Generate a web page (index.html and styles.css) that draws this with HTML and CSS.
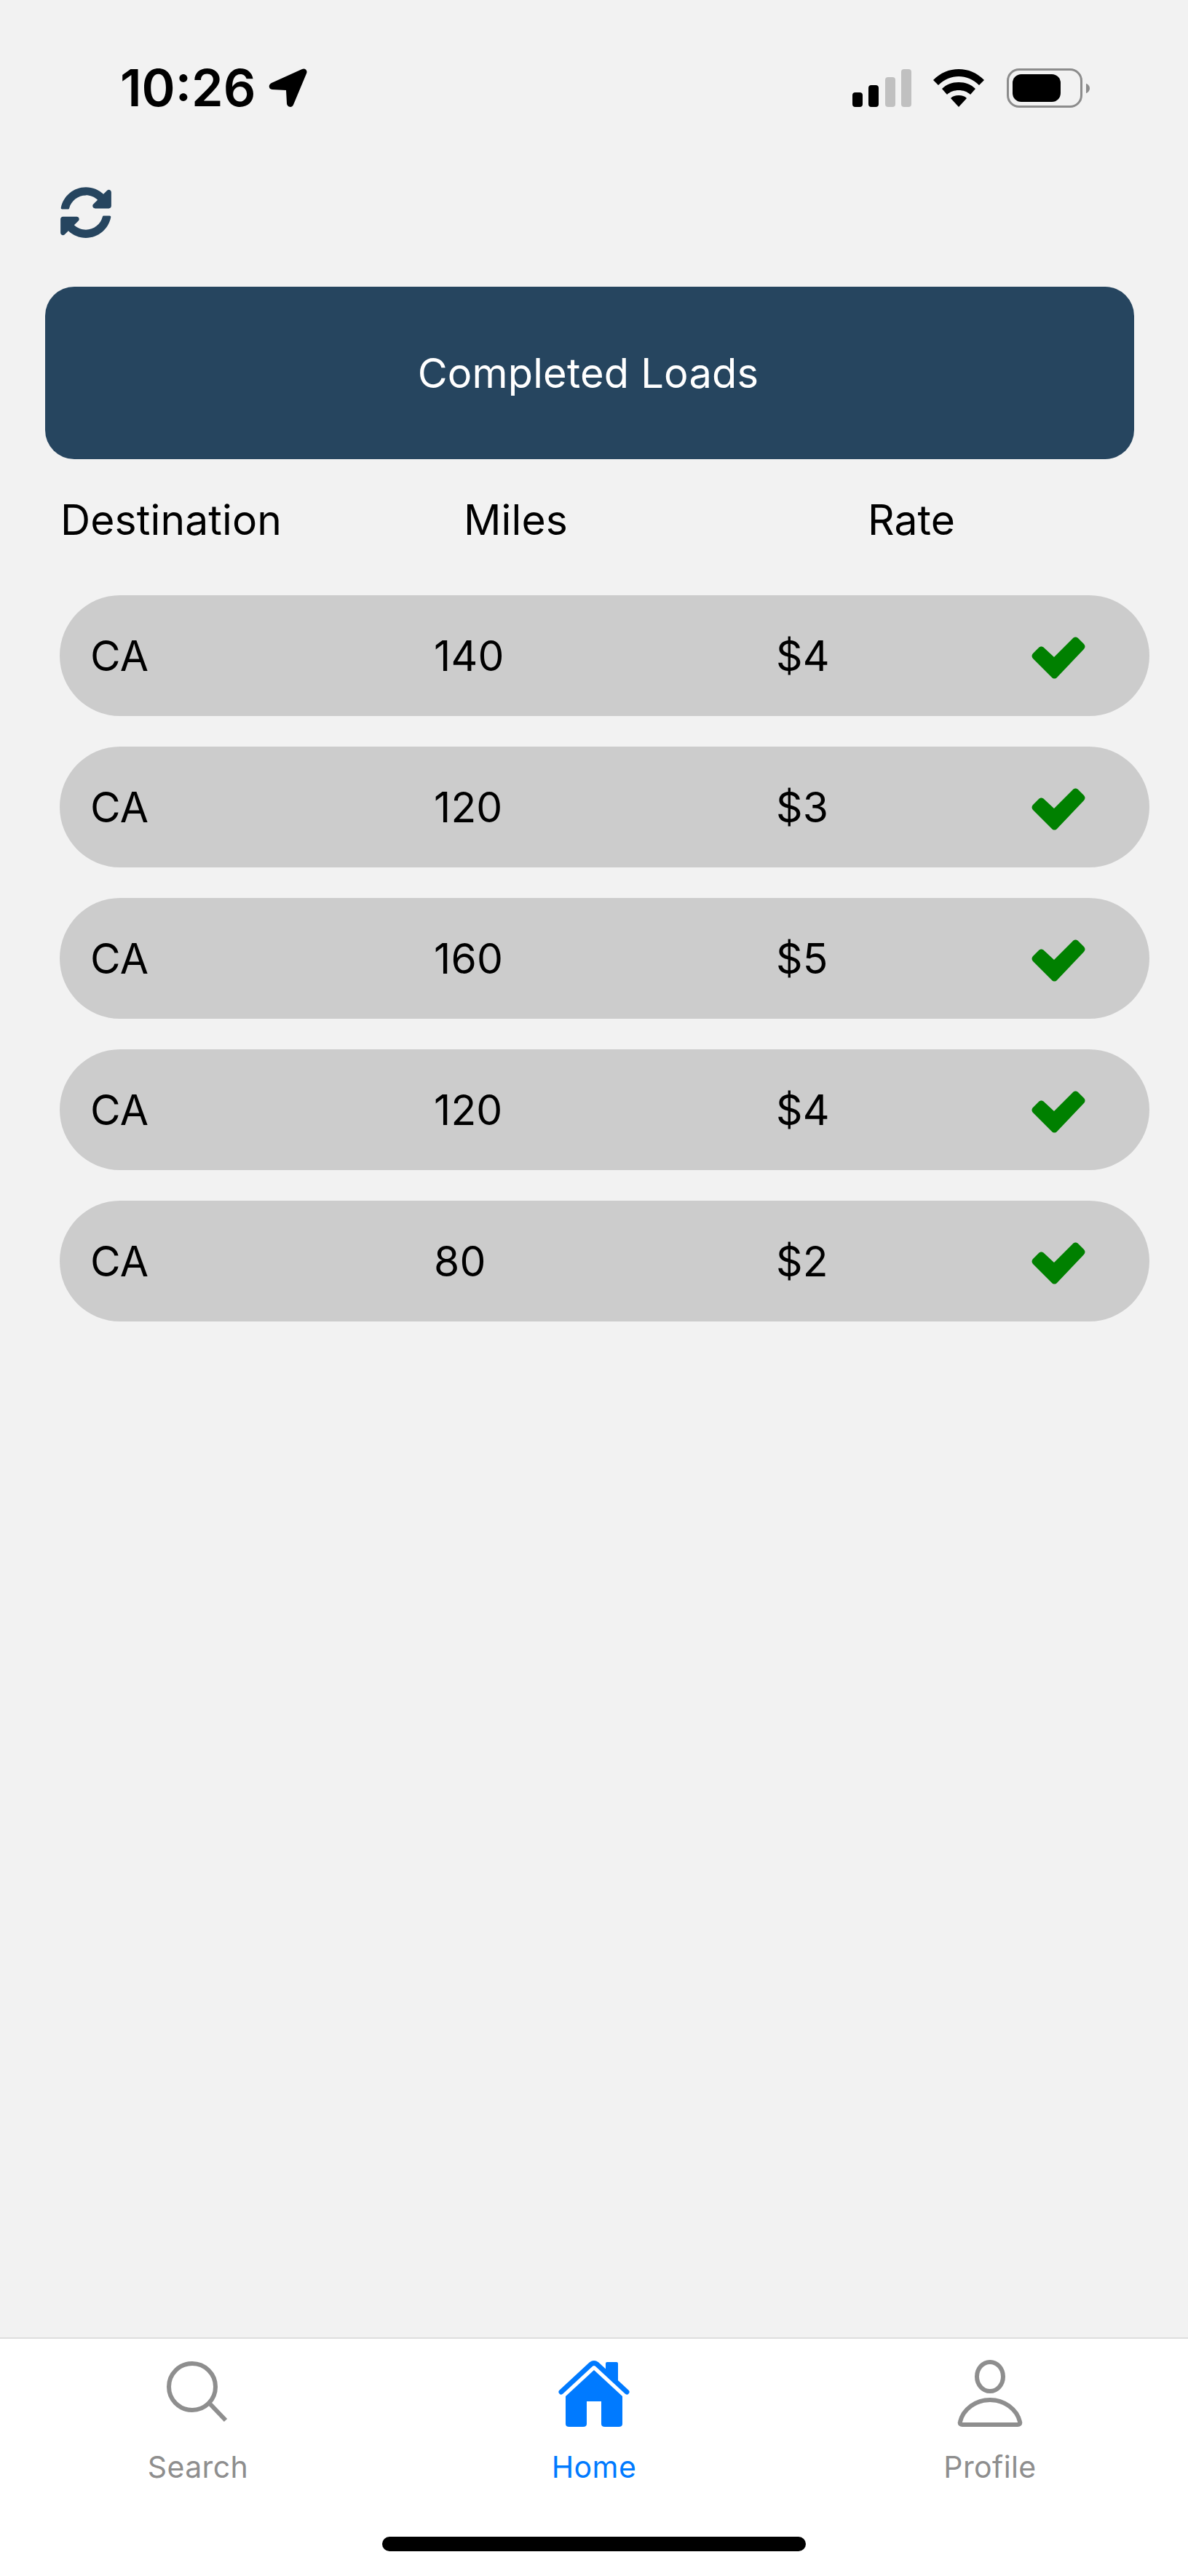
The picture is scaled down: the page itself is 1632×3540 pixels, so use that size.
FILE: index.html

```html
<!DOCTYPE html>
<html>
<head>
  <meta charset="utf-8">
  <title>Completed Loads</title>
  <link rel="stylesheet" href="styles.css">
</head>
<body>
  <div class="page">
    <div class="statusBar">
      <div class="clock">
        <span class="time">10:26</span>
        <svg class="arrow" viewBox="0 0 54 54"><path fill="#000" d="M47 1 5 20c-5 2.500-4 9 1 9l19 1 1 18c0 5 7 7 9 2L53 7c2-4-2-8-6-6z"/></svg>
      </div>
      <div class="statusIcons">
        <svg class="signal" viewBox="0 0 81 52">
          <rect x="0" y="32" width="14" height="20" rx="4" fill="#000"/>
          <rect x="22" y="22" width="14" height="30" rx="4" fill="#000"/>
          <rect x="45" y="11" width="14" height="41" rx="4" fill="#c0c0c0"/>
          <rect x="67" y="0" width="14" height="52" rx="4" fill="#c0c0c0"/>
        </svg>
        <svg class="wifi" viewBox="0 0 70 52">
          <path fill="#000" d="M35 0C22 0 10 5 0 15l7 7C15 14 25 10 35 10s20 4 28 12l7-7C60 5 48 0 35 0z"/>
          <path fill="#000" d="M35 18c-9 0-17 3-23 9l7 8c4-4 10-6 16-6s12 2 16 6l7-8c-6-6-14-9-23-9z"/>
          <path fill="#000" d="M35 36c-5 0-8 1-11 4l11 12 11-12c-3-3-6-4-11-4z"/>
        </svg>
        <div class="battery">
          <div class="batteryBody"><div class="batteryFill"></div></div>
          <svg class="batteryTip" viewBox="0 0 6 16"><path fill="#8c8c8c" d="M0 0c3 1 6 4 6 8s-3 7-6 8z"/></svg>
        </div>
      </div>
    </div>

    <div class="refresh">
      <svg viewBox="0 0 512 512"><path fill="#26455f" d="M370.720 133.280C339.458 104.008 298.888 87.962 255.848 88c-77.458.068-144.328 53.178-162.791 126.850-1.344 5.363-6.122 9.150-11.651 9.150H24.103c-7.498 0-13.194-6.807-11.807-14.176C33.933 94.924 134.813 8 256 8c66.448 0 126.791 26.136 171.315 68.685L463.030 40.970C478.149 25.851 504 36.559 504 57.941V192c0 13.255-10.745 24-24 24H345.941c-21.382 0-32.090-25.851-16.971-40.971l41.750-41.749zM32 296h134.059c21.382 0 32.090 25.851 16.971 40.971l-41.750 41.750c31.262 29.273 71.835 45.319 114.876 45.280 77.418-.070 144.315-53.144 162.787-126.849 1.344-5.363 6.122-9.150 11.651-9.150h57.304c7.498 0 13.194 6.807 11.807 14.176C478.067 417.076 377.187 504 256 504c-66.448 0-126.791-26.136-171.315-68.685L48.970 471.030C33.851 486.149 8 475.441 8 454.059V320c0-13.255 10.745-24 24-24z"/></svg>
    </div>

    <div class="banner">Completed Loads</div>

    <div class="tableHead">
      <span class="headDest">Destination</span>
      <span class="headMiles">Miles</span>
      <span class="headRate">Rate</span>
    </div>

    <div class="loadList">
      <div class="loadRow">
        <span class="cellDest">CA</span><span class="cellMiles">140</span><span class="cellRate">$4</span>
        <svg class="check" viewBox="0 0 74 58"><path fill="#008000" d="M28 56 2 30c-2-2-2-5 0-7l8-8c2-2 5-2 7 0l14 13L57 2c2-2 5-2 7 0l8 8c2 2 2 5 0 7L35 56c-2 2-5 2-7 0z"/></svg>
      </div>
      <div class="loadRow">
        <span class="cellDest">CA</span><span class="cellMiles">120</span><span class="cellRate">$3</span>
        <svg class="check" viewBox="0 0 74 58"><path fill="#008000" d="M28 56 2 30c-2-2-2-5 0-7l8-8c2-2 5-2 7 0l14 13L57 2c2-2 5-2 7 0l8 8c2 2 2 5 0 7L35 56c-2 2-5 2-7 0z"/></svg>
      </div>
      <div class="loadRow">
        <span class="cellDest">CA</span><span class="cellMiles">160</span><span class="cellRate">$5</span>
        <svg class="check" viewBox="0 0 74 58"><path fill="#008000" d="M28 56 2 30c-2-2-2-5 0-7l8-8c2-2 5-2 7 0l14 13L57 2c2-2 5-2 7 0l8 8c2 2 2 5 0 7L35 56c-2 2-5 2-7 0z"/></svg>
      </div>
      <div class="loadRow">
        <span class="cellDest">CA</span><span class="cellMiles">120</span><span class="cellRate">$4</span>
        <svg class="check" viewBox="0 0 74 58"><path fill="#008000" d="M28 56 2 30c-2-2-2-5 0-7l8-8c2-2 5-2 7 0l14 13L57 2c2-2 5-2 7 0l8 8c2 2 2 5 0 7L35 56c-2 2-5 2-7 0z"/></svg>
      </div>
      <div class="loadRow">
        <span class="cellDest">CA</span><span class="cellMiles">80</span><span class="cellRate">$2</span>
        <svg class="check" viewBox="0 0 74 58"><path fill="#008000" d="M28 56 2 30c-2-2-2-5 0-7l8-8c2-2 5-2 7 0l14 13L57 2c2-2 5-2 7 0l8 8c2 2 2 5 0 7L35 56c-2 2-5 2-7 0z"/></svg>
      </div>
    </div>

    <div class="tabBar">
      <div class="tabItems">
        <div class="tab">
          <svg class="tabIcon" viewBox="0 0 98 92"><circle cx="41" cy="37" r="32" fill="none" stroke="#8e8e8e" stroke-width="6"/><path d="M65 60 87 83" stroke="#8e8e8e" stroke-width="6" fill="none"/></svg>
          <span>Search</span>
        </div>
        <div class="tab tabActive">
          <svg class="tabIcon" viewBox="0 0 98 92">
            <path fill="none" stroke="#007aff" stroke-width="7" stroke-linecap="round" stroke-linejoin="round" d="M4 44 45 6q4-3 8 0l41 38"/>
            <path fill="#007aff" d="M65 5q0-2 2-2h13q2 0 2 2v27L65 16zM49 14 88 50v38q0 4-5 4H64q-5 0-5-4V57H39v31q0 4-5 4H15q-5 0-5-4V50z"/>
          </svg>
          <span>Home</span>
        </div>
        <div class="tab">
          <svg class="tabIcon" viewBox="0 0 98 92"><ellipse cx="49" cy="23" rx="18" ry="20" fill="none" stroke="#8e8e8e" stroke-width="6"/><path fill="none" stroke="#8e8e8e" stroke-width="6" stroke-linejoin="round" d="M11 89c-2 0-4-1-3-4 4-17 21-30 41-30s37 13 41 30c1 3-1 4-3 4z"/></svg>
          <span>Profile</span>
        </div>
      </div>
      <div class="homeBar"></div>
    </div>
  </div>
</body>
</html>
```

FILE: styles.css

```css
* {
  box-sizing: border-box;
}

html, body {
  margin: 0;
  padding: 0;
}

body {
  font-family: "Inter", "Liberation Sans", sans-serif;
  background-color: #F2F2F2;
  color: #000;
}

.page {
  width: 1632px;
  height: 3540px;
  display: flex;
  flex-direction: column;
}

/* status bar */
.statusBar {
  height: 256px;
  padding: 94px 135px 0 165px;
  display: flex;
  justify-content: space-between;
  align-items: flex-start;
  flex: none;
}

.clock {
  display: flex;
  align-items: center;
  gap: 17px;
  height: 54px;
}

.time {
  font-size: 70px;
  font-weight: 600;
  line-height: 54px;
}

.arrow {
  width: 54px;
  height: 54px;
}

.statusIcons {
  display: flex;
  align-items: flex-start;
}

.signal {
  width: 81px;
  height: 52px;
  margin: 1px 30px 0 0;
}

.wifi {
  width: 70px;
  height: 52px;
  margin: 1px 31px 0 0;
}

.battery {
  display: flex;
  align-items: center;
  gap: 5px;
}

.batteryBody {
  width: 104px;
  height: 54px;
  border: 3px solid #8c8c8c;
  border-radius: 17px;
  padding: 5px;
}

.batteryFill {
  width: 66px;
  height: 38px;
  background-color: #000;
  border-radius: 12px;
}

.batteryTip {
  width: 5px;
  height: 15px;
}

/* refresh */
.refresh {
  height: 72px;
  margin-left: 82px;
  flex: none;
}

.refresh svg {
  width: 72px;
  height: 72px;
  display: block;
}

/* banner */
.banner {
  width: 1496px;
  height: 237px;
  margin: 66px 0 0 62px;
  background-color: #26455F;
  border-radius: 40px;
  color: #fff;
  font-size: 56px;
  letter-spacing: 0.2px;
  display: flex;
  align-items: center;
  justify-content: center;
  padding-right: 4px;
  flex: none;
}

/* header row */
.tableHead {
  height: 187px;
  padding-top: 49px;
  display: flex;
  font-size: 57px;
  letter-spacing: 0.1px;
  line-height: 70px;
  flex: none;
}

.headDest {
  margin-left: 83px;
  width: 554px;
}

.headMiles {
  width: 555px;
}

/* rows */
.loadList {
  display: flex;
  flex-direction: column;
  gap: 42px;
  margin-left: 82px;
  width: 1497px;
  flex: 1;
}

.loadRow {
  height: 166px;
  background-color: #CCCCCC;
  border-radius: 83px;
  display: flex;
  align-items: center;
  font-size: 57px;
  letter-spacing: 0.2px;
}

.cellDest {
  margin-left: 42px;
  width: 472px;
}

.cellMiles {
  width: 470px;
}

.cellRate {
  width: 351px;
}

.check {
  width: 74px;
  height: 58px;
  margin-top: 5px;
}

/* tab bar */
.tabBar {
  height: 328px;
  background-color: #fff;
  border-top: 2px solid #DEDEDE;
  flex: none;
}

.tabItems {
  display: grid;
  grid-template-columns: 544px 544px 544px;
  height: 272px;
  padding-top: 29px;
}

.tab {
  display: flex;
  flex-direction: column;
  align-items: center;
  color: #8E8E8E;
  font-size: 41px;
  letter-spacing: 0.4px;
  line-height: 50px;
}

.tabActive {
  color: #007AFF;
}

.tabIcon {
  width: 98px;
  height: 92px;
  margin-bottom: 30px;
}

.homeBar {
  width: 582px;
  height: 20px;
  margin: 0 auto;
  background-color: #000;
  border-radius: 10px;
}
```
